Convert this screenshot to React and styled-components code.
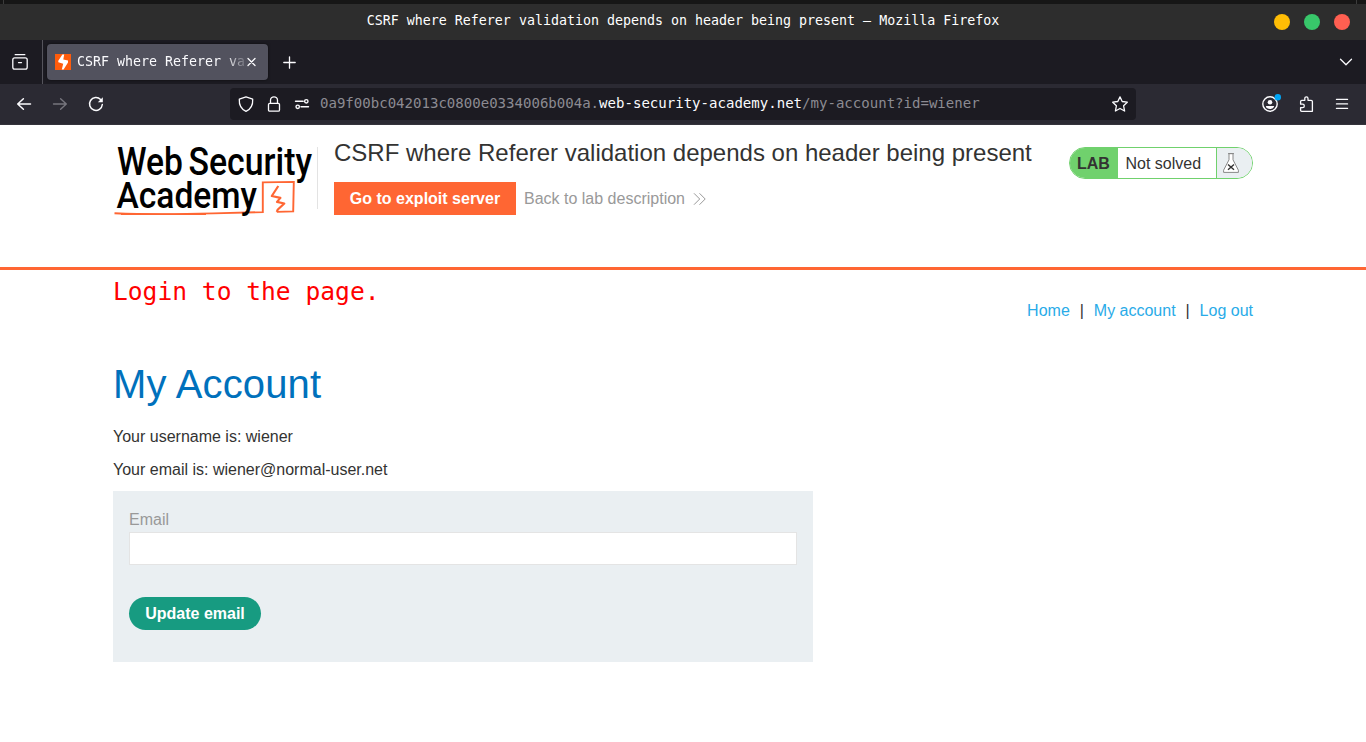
import React from "react";
import styled, { createGlobalStyle } from "styled-components";

const GlobalStyle = createGlobalStyle`
  *, *::before, *::after { box-sizing: border-box; }
  html, body { margin: 0; background: #fff; }
  body { font: 16px/1 "Liberation Sans", Arial, sans-serif; color: #333332; overflow: hidden; }
  svg { display: block; flex: none; overflow: visible; }
`;
const mono = `font-family: "DejaVu Sans Mono", monospace; white-space: pre;`;

const Window = styled.div`
  width: 1366px;
  height: 742px;
  overflow: hidden;
`;
const DesktopStrip = styled.div`
  height: 4px;
  background: #161616;
  padding: 0 10px 0 3px;
  display: flex;
  justify-content: space-between;
  &::before { content: ""; width: 1px; background: #3c3c3c; }
  &::after { content: ""; width: 1px; margin-right: -1px; background: #3c3c3c; }
`;
const TitleBar = styled.div`
  height: 36px;
  background: #2d2d2d;
  display: grid;
  grid-template-columns: 1fr auto 1fr;
  align-items: center;
`;
const WindowTitle = styled.div`
  ${mono}
  grid-column: 2;
  color: #fff;
  font-size: 13.3px;
  line-height: 16px;
  padding-bottom: 3px;
`;
const WindowButtons = styled.div`
  display: flex;
  justify-content: flex-end;
  gap: 14px;
  padding-right: 16px;
`;
const WindowButton = styled.span`
  width: 16px;
  height: 16px;
  border-radius: 50%;
  background: ${(p) => p.$color};
`;
const TabBar = styled.div`
  height: 44px;
  background: #1c1b22;
  display: flex;
  align-items: center;
`;
const FirefoxView = styled.div`
  width: 43px;
  height: 44px;
  padding: 14px 0 0 12px;
  border-right: 1px solid #55545c;
`;
const Tab = styled.div`
  width: 221px;
  height: 36px;
  margin-left: 4px;
  padding: 0 10px 0 8px;
  border-radius: 4px;
  background: #52525e;
  box-shadow: 0 0 3px rgba(0, 0, 0, 0.6);
  display: flex;
  align-items: center;
`;
const TabLabel = styled.span`
  ${mono}
  width: 169px;
  margin-left: 6px;
  overflow: hidden;
  color: #fbfbfe;
  font-size: 13.3px;
  line-height: 20px;
  mask-image: linear-gradient(to right, #000 148px, transparent 172px);
`;
const NewTab = styled.div`
  margin: 0 auto 0 13px;
`;
const TabList = styled.div`
  margin-right: 12px;
`;
const NavBar = styled.div`
  height: 41px;
  background: #2b2a33;
  border-bottom: 1px solid #35343c;
  display: flex;
  align-items: center;
`;
const NavButtons = styled.div`
  width: 230px;
  padding-left: 16px;
  display: flex;
  gap: 20px;
`;
const UrlBar = styled.div`
  width: 906px;
  height: 32px;
  padding: 0 8px;
  border-radius: 4px;
  background: #1c1b22;
  display: flex;
  align-items: center;
  gap: 12px;
`;
const Address = styled.div`
  ${mono}
  flex: 1;
  margin-left: -2px;
  padding-bottom: 2px;
  color: #8c8b92;
  font-size: 14.06px;
  line-height: 20px;
`;
const Domain = styled.span`
  color: #fbfbfe;
`;
const Tools = styled.div`
  margin-left: auto;
  padding-right: 16px;
  display: flex;
  gap: 20px;
`;

const LabHeader = styled.header`
  height: 145px;
  border-bottom: 3px solid #ff6633;
`;
const Container = styled.div`
  width: 1140px;
  margin: 0 auto;
`;
const HeaderRow = styled(Container)`
  display: flex;
  align-items: flex-start;
`;
const LogoBox = styled.div`
  width: 205px;
  height: 62px;
  margin-top: 22px;
  border-right: 1px solid #e3e3e3;
`;
const TitleBlock = styled.div`
  padding: 12px 0 0 16px;
`;
const LabTitle = styled.h2`
  margin: 0;
  font-size: 24px;
  font-weight: 400;
  line-height: 31px;
  white-space: nowrap;
`;
const Actions = styled.div`
  margin-top: 14px;
  display: flex;
  align-items: center;
`;
const ExploitButton = styled.a`
  width: 182px;
  height: 33px;
  background: #ff6633;
  color: #fff;
  font-weight: 700;
  line-height: 33px;
  text-align: center;
`;
const BackLink = styled.a`
  margin-left: 8px;
  color: #999;
  line-height: 33px;
  display: flex;
  align-items: center;
  gap: 9px;
`;
const Status = styled.div`
  width: 184px;
  height: 32px;
  margin: 22px 0 0 auto;
  border: 1px solid #70d16d;
  border-radius: 16px;
  overflow: hidden;
  display: flex;
  line-height: 31px;
`;
const StatusTag = styled.span`
  width: 48px;
  padding-left: 7px;
  background: #70d16d;
  font-weight: 700;
  line-height: 32px;
`;
const StatusText = styled.span`
  width: 98px;
  padding-left: 7.5px;
`;
const StatusIcon = styled.span`
  flex: 1;
  border-left: 1px solid #70d16d;
  background: #eaeff2;
  padding: 5px 0 0 6px;
`;

const TopRow = styled(Container)`
  height: 89px;
  display: flex;
  justify-content: space-between;
`;
const Annotation = styled.div`
  ${mono}
  margin-top: 6px;
  color: #ff0000;
  font-size: 24.6px;
  line-height: 32px;
`;
const Links = styled.nav`
  margin-top: 31px;
  display: flex;
  line-height: 20px;
`;
const Link = styled.a`
  color: #29abe8;
`;
const Divider = styled.span`
  width: 24px;
  padding-left: 10px;
`;
const PageTitle = styled.h1`
  margin: 0;
  color: #0071bc;
  font-size: 40px;
  font-weight: 400;
  line-height: 50px;
  letter-spacing: 0.15px;
`;
const Line = styled.p`
  margin: ${(p) => p.$top}px 0 0;
  line-height: 20px;
`;
const Form = styled.form`
  width: 700px;
  height: 171px;
  margin-top: 11px;
  padding: 19px 16px 0;
  background: #eaeff2;
`;
const Label = styled.label`
  display: block;
  color: #999;
  line-height: 20px;
`;
const Input = styled.input`
  display: block;
  width: 668px;
  height: 33px;
  margin-top: 2px;
  border: 1px solid #e4e4e4;
  border-radius: 0;
  background: #fff;
  outline: 0;
`;
const Submit = styled.button`
  width: 132px;
  height: 33px;
  margin-top: 32px;
  padding: 0;
  border: 0;
  border-radius: 17px;
  background: #179b81;
  color: #fff;
  font: 700 16px/33px "Liberation Sans", Arial, sans-serif;
`;

const Icon = ({ color = "#fbfbfe", width = 1.3, children }) => (
  <svg width="16" height="16" viewBox="0 0 16 16" fill="none" stroke={color} strokeWidth={width} strokeLinecap="round" strokeLinejoin="round">
    {children}
  </svg>
);

const Logo = () => (
  <svg width="204" height="72" viewBox="0 0 204 72">
    <g fill="#000" fontFamily="Roboto, sans-serif" fontWeight="500" fontSize="38">
      <text x="4" y="28.2" textLength="66" lengthAdjust="spacingAndGlyphs">Web</text>
      <text x="75.5" y="28.2" textLength="123.5" lengthAdjust="spacingAndGlyphs">Security</text>
    </g>
    <path d="M1.5 66.2C40 67.8 68 67.2 100 66.4L149.8 65.1V35.4L180.8 34.9L180.2 64.4L163.8 64.9" fill="none" stroke="#ff6633" strokeWidth="1.9" />
    <path d="M8 67.2L93 67.3" fill="none" stroke="#ff6633" strokeWidth="1.5" />
    <path d="M165.3 39L158.8 49L167.4 50.9L164 54.9L171.3 56.5L164.6 62.8L163.8 64.9" fill="none" stroke="#ff6633" strokeWidth="2.2" strokeLinejoin="round" />
    <text x="3.5" y="61.3" fill="#000" fontFamily="Roboto, sans-serif" fontWeight="500" fontSize="37.4" textLength="140.5" lengthAdjust="spacingAndGlyphs">Academy</text>
  </svg>
);

export default function App() {
  return (
    <Window>
      <GlobalStyle />
      <DesktopStrip />
      <TitleBar>
        <WindowTitle>CSRF where Referer validation depends on header being present — Mozilla Firefox</WindowTitle>
        <WindowButtons>
          <WindowButton $color="#ffbd05" />
          <WindowButton $color="#38c76a" />
          <WindowButton $color="#ff5f51" />
        </WindowButtons>
      </TitleBar>
      <TabBar>
        <FirefoxView>
          <Icon>
            <path d="M3.2 0.7H12.8M2.7 3.9H13.3Q15.2 3.9 15.2 5.8V13.3Q15.2 15.2 13.3 15.2H2.7Q.8 15.2 .8 13.3V5.8Q.8 3.9 2.7 3.9ZM6.5 8.6H9.5" />
          </Icon>
        </FirefoxView>
        <Tab>
          <svg width="16" height="16" viewBox="0 0 16 16">
            <path fill="#ff5c0c" d="M0 0H16V16H0Z" />
            <path fill="#fff" d="M7.4 .5H9.2L8.3 5.6L13 6.6V8.4L8.6 15.5H6.8L8.2 9.7L3.3 8.2V6.8Z" />
          </svg>
          <TabLabel>CSRF where Referer va</TabLabel>
          <svg width="10" height="10" viewBox="0 0 10 10" stroke="#fbfbfe" strokeWidth="1.3" strokeLinecap="round">
            <path d="M2 1.5L9 8.5M9 1.5L2 8.5" />
          </svg>
        </Tab>
        <NewTab>
          <Icon><path d="M8.5 2.8V14.2M2.8 8.5H14.2" /></Icon>
        </NewTab>
        <TabList>
          <Icon><path d="M2.5 5.3L8 10.8L13.5 5.3" /></Icon>
        </TabList>
      </TabBar>
      <NavBar>
        <NavButtons>
          <Icon width={1.5}><path d="M14.5 8H1.7M7.4 2.7L1.7 8L7.4 13.3" /></Icon>
          <Icon width={1.4} color="#77767e"><path d="M1.5 8H14.3M8.6 2.7L14.3 8L8.6 13.3" /></Icon>
          <Icon width={1.5}>
            <path d="M14.3 8.5A6.4 6.4 0 1 1 12.6 3.6" />
            <path d="M14.8 1.2V6.2H9.8Z" fill="#fbfbfe" stroke="none" />
          </Icon>
        </NavButtons>
        <UrlBar>
          <Icon><path d="M8 .8L14.7 3.2C15 8.5 13 13 8 15.3C3 13 1 8.5 1.3 3.2Z" /></Icon>
          <Icon><path d="M3.8 7.3H12.2Q13.5 7.3 13.5 8.6V13.9Q13.5 15.2 12.2 15.2H3.8Q2.5 15.2 2.5 13.9V8.6Q2.5 7.3 3.8 7.3ZM4.5 7V4.3A3.5 3.5 0 0 1 11.5 4.3V7" /></Icon>
          <Icon width={1.4}>
            <path d="M1.5 5.3H9.2M7 10.8H14.5" />
            <circle cx="12.3" cy="5.3" r="1.7" />
            <circle cx="3.7" cy="10.8" r="1.7" />
          </Icon>
          <Address>
            0a9f00bc042013c0800e0334006b004a.<Domain>web-security-academy.net</Domain>/my-account?id=wiener
          </Address>
          <Icon><path d="M8 .9L10.2 5.5L15.3 6.2L11.6 9.8L12.6 15L8 12.5L3.4 15L4.4 9.8L.7 6.2L5.8 5.5Z" /></Icon>
        </UrlBar>
        <Tools>
          <Icon width={1.4}>
            <circle cx="8" cy="8" r="7.2" />
            <circle cx="8" cy="6.2" r="2.3" fill="#fbfbfe" stroke="none" />
            <path d="M3.8 10H12.2C11.7 14 4.3 14 3.8 10Z" fill="#fbfbfe" stroke="none" />
            <circle cx="15.8" cy="1.2" r="3.2" fill="#00a5f5" stroke="none" />
          </Icon>
          <Icon>
            <path d="M6.8 4.3V2.4A1.6 1.6 0 0 1 10 2.4V4.3H13.1Q14.4 4.3 14.4 5.6V15.3H3.7Q2.6 15.3 2.6 14.2V11.6H4.6A1.6 1.6 0 0 0 4.6 8.2H2.6V5.5Q2.6 4.3 3.8 4.3Z" />
          </Icon>
          <Icon width={1.4}><path d="M2.5 3.4H13.5M2.5 7.9H13.5M2.5 12.4H13.5" /></Icon>
        </Tools>
      </NavBar>

      <LabHeader>
        <HeaderRow>
          <LogoBox><Logo /></LogoBox>
          <TitleBlock>
            <LabTitle>CSRF where Referer validation depends on header being present</LabTitle>
            <Actions>
              <ExploitButton>Go to exploit server</ExploitButton>
              <BackLink>
                Back to lab description
                <svg width="12" height="12" viewBox="0 0 12 12" fill="none" stroke="#999" strokeWidth="1">
                  <path d="M0 .3L5.7 6L0 11.7M5.5 .3L11.2 6L5.5 11.7" />
                </svg>
              </BackLink>
            </Actions>
          </TitleBlock>
          <Status>
            <StatusTag>LAB</StatusTag>
            <StatusText>Not solved</StatusText>
            <StatusIcon>
              <svg width="16" height="20" viewBox="0 0 16 20" fill="none" stroke="#888" strokeWidth="1">
                <path d="M6 .6V6.8L.6 17.2V19.4H15.4V17.2L10 6.8V.6Z" fill="#fff" />
                <path d="M5 .6H11" />
                <path d="M5 11.4L11 16.8M11 11.4L5 16.8" stroke="#333" strokeWidth="1.4" />
              </svg>
            </StatusIcon>
          </Status>
        </HeaderRow>
      </LabHeader>

      <TopRow>
        <Annotation>Login to the page.</Annotation>
        <Links>
          <Link>Home</Link>
          <Divider>|</Divider>
          <Link>My account</Link>
          <Divider>|</Divider>
          <Link>Log out</Link>
        </Links>
      </TopRow>
      <Container>
        <PageTitle>My Account</PageTitle>
        <Line $top={18}>Your username is: wiener</Line>
        <Line $top={13}>Your email is: wiener@normal-user.net</Line>
        <Form>
          <Label>Email</Label>
          <Input aria-label="Email" />
          <Submit type="button">Update email</Submit>
        </Form>
      </Container>
    </Window>
  );
}
